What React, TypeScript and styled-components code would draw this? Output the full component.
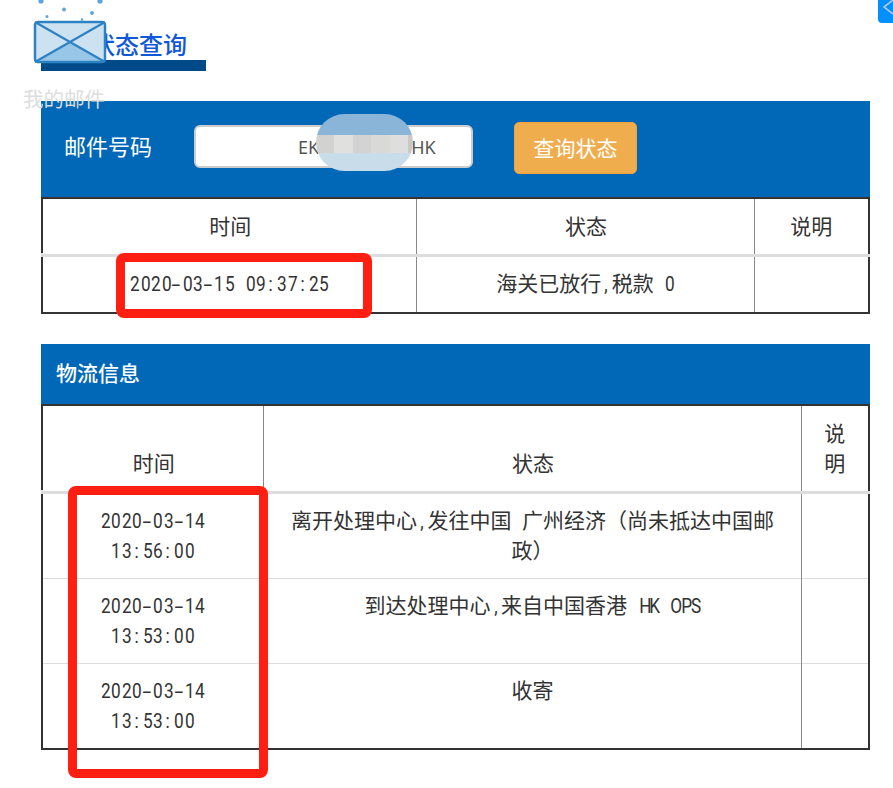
import React from "react"
import styled, {createGlobalStyle} from "styled-components"

const GlobalStyle = createGlobalStyle`
  html, body {
    margin: 0;
    padding: 0;
    background: #fff;
  }
  body {
    font-family: "Noto Sans CJK SC", "Liberation Sans", sans-serif;
    color: #333;
  }
`

// half-width latin, every character sits in its own 10.5px slot
function Latin({text}: { text: string }) {
    return (
        <>
            {text.split("").map((char, i) => (
                <LatinSlot key={i}>
                    <LatinChar $dash={char === "-"}>{char === " " ? "\u00a0" : char}</LatinChar>
                </LatinSlot>
            ))}
        </>
    )
}

const firstRows = [{time: "2020-03-15 09:37:25", status: <>海关已放行<Latin text=","/>税款<Latin text=" 0"/></>}]

const logisticsRows = [
    {
        date: "2020-03-14",
        clock: "13:56:00",
        status: <>离开处理中心<Latin text=","/>发往中国<Latin text=" "/>广州经济（尚未抵达中国邮政）</>
    },
    {date: "2020-03-14", clock: "13:53:00", status: <>到达处理中心<Latin text=","/>来自中国香港<Latin text=" HK OPS"/></>},
    {date: "2020-03-14", clock: "13:53:00", status: <>收寄</>}
]

const mosaic = ["#d2d2d0", "#e0e0de", "#d3d3d3", "#d9d9d8", "#dedede", "#c8c8c6"]

export default function App() {
    return (
        <Page>
            <GlobalStyle/>
            <SideTab>
                <svg width="15" height="23" viewBox="0 0 15 23">
                    <path d="M15 0 L6 7 L15 14" fill="none" stroke="#b9c4cc" strokeWidth="1.6"/>
                </svg>
            </SideTab>

            <MailIcon width="80" height="65" viewBox="0 0 80 65">
                <g fill="#5ca5dc">
                    <circle cx="11" cy="1" r="2.6"/>
                    <circle cx="70" cy="1" r="2.6"/>
                    <circle cx="34" cy="9.500" r="1.900"/>
                    <circle cx="62" cy="13" r="1.900"/>
                    <circle cx="17" cy="16.500" r="1.500"/>
                    <circle cx="52" cy="19.500" r="1.200"/>
                </g>
                <rect x="5" y="22" width="70" height="40" rx="3" fill="#cde2f1"/>
                <path d="M5 62 L40 42 L75 62 Z" fill="#98c6e6"/>
                <rect x="5" y="22" width="70" height="40" rx="3" fill="none" stroke="#2d82c4" strokeWidth="2.500"/>
                <path d="M5 22 L75 62 M75 22 L5 62" stroke="#2d82c4" strokeWidth="2.200"/>
            </MailIcon>
            <MailLabel>我的邮件</MailLabel>

            <TitleBlock>
                <Title>状态查询</Title>
            </TitleBlock>

            <BlueBar $tall>
                <SearchLabel>邮件号码</SearchLabel>
                <SearchInput>EK<Gap/>HK</SearchInput>
                <SearchButton>查询状态</SearchButton>
            </BlueBar>
            <Table>
                <colgroup>
                    <col width="374"/>
                    <col width="338"/>
                    <col/>
                </colgroup>
                <thead>
                <tr>
                    <HeadCell>时间</HeadCell>
                    <HeadCell>状态</HeadCell>
                    <HeadCell>说明</HeadCell>
                </tr>
                </thead>
                <tbody>
                {firstRows.map(row => (
                    <tr key={row.time}>
                        <Cell $bottom={15}><Latin text={row.time}/></Cell>
                        <Cell $bottom={15}>{row.status}</Cell>
                        <Cell $bottom={15}/>
                    </tr>
                ))}
                </tbody>
            </Table>

            <BlueBar>
                <BarTitle>物流信息</BarTitle>
            </BlueBar>
            <Table>
                <colgroup>
                    <col width="221"/>
                    <col width="538"/>
                    <col/>
                </colgroup>
                <thead>
                <tr>
                    <HeadCell>时间</HeadCell>
                    <HeadCell>状态</HeadCell>
                    <HeadCell>说明</HeadCell>
                </tr>
                </thead>
                <tbody>
                {logisticsRows.map((row, i) => (
                    <tr key={i}>
                        <Cell $bottom={14}><Latin text={row.date}/><br/><Latin text={row.clock}/></Cell>
                        <Cell $bottom={14}>{row.status}</Cell>
                        <Cell $bottom={14}/>
                    </tr>
                ))}
                </tbody>
            </Table>

            <Blur>
                <BlurTop/>
                <BlurBand>
                    {mosaic.map((color, i) => <BlurCell key={i} $color={color} $last={i === mosaic.length - 1}/>)}
                </BlurBand>
                <BlurBottom/>
            </Blur>
            <Marker $left={116} $top={253} $width={256} $height={65}/>
            <Marker $left={68} $top={486} $width={200} $height={292}/>
        </Page>
    )
}

const Page = styled.div`
  position: relative;
  box-sizing: border-box;
  width: 893px;
  height: 788px;
  padding: 0 23px 0 41px;
  overflow: hidden;
`
const SideTab = styled.div`
  position: absolute;
  top: 0;
  right: 0;
  width: 15px;
  height: 23px;
  background: #0090ff;
  border-bottom-left-radius: 4px;
  overflow: hidden;
`
const MailIcon = styled.svg`
  position: absolute;
  left: 30px;
  top: 0;
  z-index: 1;
`
const MailLabel = styled.div`
  position: absolute;
  left: 23px;
  top: 83px;
  font-size: 20.500px;
  line-height: 30px;
  color: #ddd;
  z-index: 2;
`
const TitleBlock = styled.div`
  height: 101px;
`
const Title = styled.h2`
  box-sizing: border-box;
  width: 165px;
  height: 71px;
  margin: 0;
  padding: 28px 0 0 50px;
  border-bottom: 11px solid #004a8a;
  font-size: 24px;
  line-height: 32px;
  font-weight: 500;
  color: #1158d8;
  white-space: nowrap;
`
const BlueBar = styled.div<{ $tall?: boolean }>`
  display: flex;
  align-items: center;
  box-sizing: border-box;
  height: ${p => p.$tall ? 96 : 60}px;
  padding-left: ${p => p.$tall ? 23 : 15}px;
  padding-bottom: ${p => p.$tall ? 2 : 4}px;
  background: #0068b7;
  color: #fff;
`
const SearchLabel = styled.div`
  width: 130px;
  margin-bottom: 6px;
  font-size: 22px;
`
const SearchInput = styled.div`
  display: flex;
  align-items: center;
  box-sizing: border-box;
  width: 279px;
  height: 43px;
  margin-bottom: 3px;
  padding-left: 102px;
  background: #fff;
  border: 2px solid #ccc;
  border-radius: 6px;
  font-family: "Noto Sans", sans-serif;
  font-size: 18px;
  color: #555;
`
const Gap = styled.span`
  width: 92px;
`
const SearchButton = styled.div`
  display: flex;
  justify-content: center;
  align-items: center;
  box-sizing: border-box;
  width: 123px;
  height: 52px;
  margin-left: 41px;
  padding-bottom: 2px;
  background: #f0ad4e;
  border: 1px solid #eea236;
  border-radius: 5px;
  font-size: 21px;
`
const BarTitle = styled.div`
  font-size: 21px;
  font-weight: 500;
`
const Table = styled.table`
  box-sizing: border-box;
  width: 829px;
  margin: 0 0 30px;
  border-collapse: collapse;
  table-layout: fixed;
  border: 2px solid #333;
`
const HeadCell = styled.th`
  position: relative;
  box-sizing: border-box;
  padding: 11px 14px 14px 16px;
  border-left: 1px solid #888;
  border-bottom: 3px solid #ddd;
  vertical-align: bottom;
  text-align: center;
  font-size: 21px;
  font-weight: 400;
  line-height: 30px;
  color: #333;

  &:first-child {
    border-left: none;
  }
  &:first-child::before {
    content: "";
    position: absolute;
    left: -2px;
    bottom: -2px;
    width: 2px;
    height: 3px;
    background: #ddd;
  }
  &:last-child {
    padding-left: 15px;
    padding-right: 15px;
  }
`
const Cell = styled.td<{ $bottom: number }>`
  box-sizing: border-box;
  padding: 10px 14.500px ${p => p.$bottom}px 15.500px;
  border-left: 1px solid #888;
  border-top: 1px solid #ddd;
  vertical-align: top;
  text-align: center;
  font-size: 21px;
  line-height: 30px;
  color: #333;

  &:first-child {
    border-left: none;
    padding-left: 14.500px;
    padding-right: 15.500px;
  }
`
const LatinSlot = styled.span`
  display: inline-block;
  width: 10.500px;
  line-height: 1;
  text-align: center;
  font-family: Roboto, sans-serif;
  font-size: 21px;
  font-weight: 400;
`
const LatinChar = styled.span<{ $dash: boolean }>`
  display: inline-block;
  transform: scaleX(${p => p.$dash ? 1.5 : 0.82});
`
const Blur = styled.div`
  position: absolute;
  left: 316px;
  top: 114px;
  width: 97px;
  height: 57px;
  display: flex;
  flex-direction: column;
  border-radius: 30px;
  overflow: hidden;
`
const BlurTop = styled.div`
  height: 21px;
  background: #8ab5d9;
`
const BlurBand = styled.div`
  display: flex;
  height: 18px;
`
const BlurCell = styled.div<{ $color: string, $last: boolean }>`
  width: ${p => p.$last ? 5 : 18.400}px;
  background: ${p => p.$color};
`
const BlurBottom = styled.div`
  flex: 1;
  background: #c9dcea;
`
const Marker = styled.div<{ $left: number, $top: number, $width: number, $height: number }>`
  position: absolute;
  left: ${p => p.$left}px;
  top: ${p => p.$top}px;
  width: ${p => p.$width}px;
  height: ${p => p.$height}px;
  box-sizing: border-box;
  border: 9px solid #ff1f12;
  border-radius: 8px;
`
